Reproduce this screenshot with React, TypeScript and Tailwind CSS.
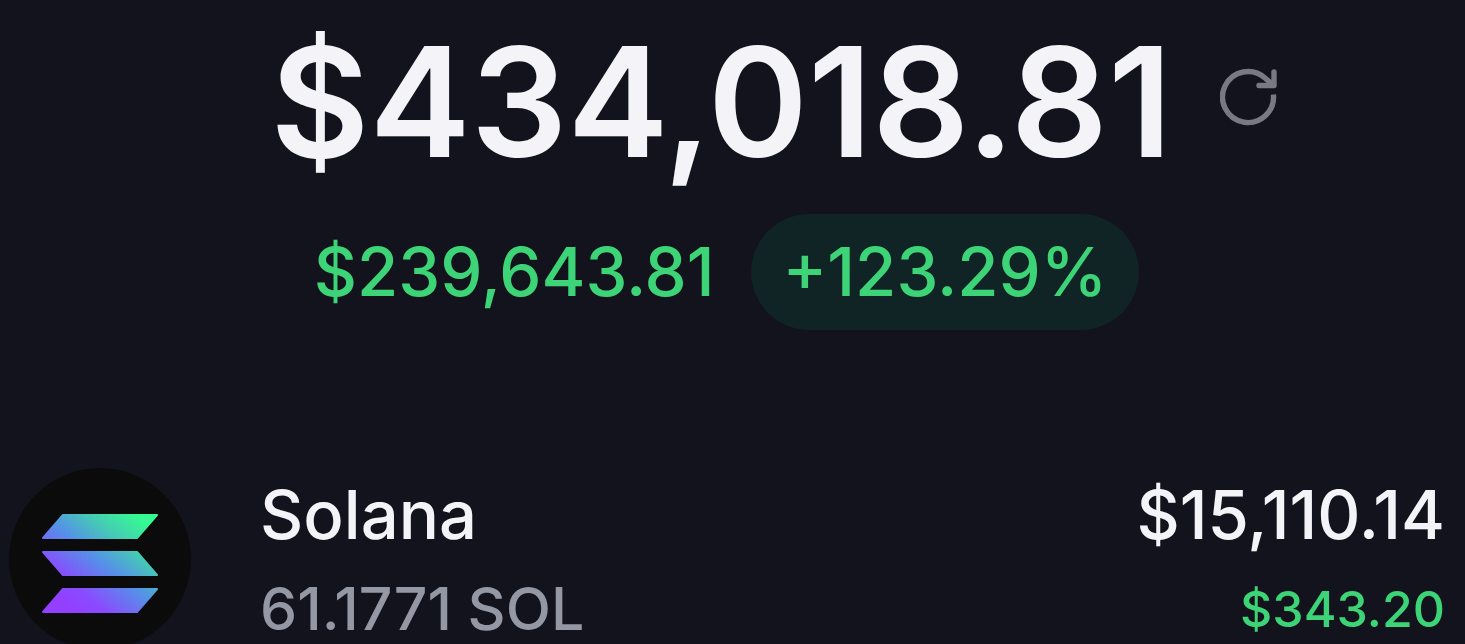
export default function App() {
  return (
    <main className="min-h-screen overflow-hidden bg-[#12131c] font-['Inter',sans-serif] font-medium text-[#f3f3f8]">
      <section className="flex flex-col items-center pt-5">
        <div className="flex items-start gap-12 pl-[86px]">
          <h1 className="text-[152px] leading-[164px] font-semibold">$434,018.81</h1>
          <button type="button" aria-label="Refresh balance" className="mt-12 text-[#777a85]">
            <svg className="size-15" viewBox="0 0 60 60" fill="none" stroke="currentColor" strokeWidth="5.4">
              <path d="M53.400 26.500A25.500 25.500 0 1 1 45 10L52 16" />
              <path strokeLinecap="round" strokeLinejoin="round" d="M54 4V17.500H39" />
            </svg>
          </button>
        </div>
        <div className="mt-[30px] flex items-center gap-9 pr-3 text-[67px] leading-[116px] text-[#3dd477]">
          <span>$239,643.81</span>
          <span className="rounded-full bg-[#102325] px-8">+123.29%</span>
        </div>
      </section>
      <section className="mt-34 flex pl-2 pr-5">
        <svg className="size-[184px] shrink-0" viewBox="0 0 184 184" role="img" aria-label="Solana logo">
          <defs>
            <linearGradient id="solana" gradientUnits="userSpaceOnUse" x1="52" y1="139" x2="126" y2="47">
              <stop offset="0" stopColor="#943eff" />
              <stop offset="0.2" stopColor="#8a4bff" />
              <stop offset="0.5" stopColor="#5590e8" />
              <stop offset="0.75" stopColor="#45cbb5" />
              <stop offset="1" stopColor="#35fa91" />
            </linearGradient>
          </defs>
          <circle cx="92" cy="93" r="91" fill="#0b0b0c" />
          <path fill="url(#solana)" stroke="url(#solana)" strokeWidth="2" strokeLinejoin="round" d="M55 49H149L129 72H35ZM35 86H129L149 109H55ZM55 123H149L129 146H35Z" />
        </svg>
        <div className="ml-17 flex grow justify-between pt-3">
          <div>
            <h2 className="text-[67px] leading-[74px]">Solana</h2>
            <p className="mt-4 text-[59px] leading-[82px] text-[#9497a4]">61.1771 SOL</p>
          </div>
          <div className="text-right">
            <p className="text-[67px] leading-[74px]">$15,110.14</p>
            <p className="mt-4 text-[50px] leading-[82px] text-[#3dd477]">$343.20</p>
          </div>
        </div>
      </section>
    </main>
  );
}
